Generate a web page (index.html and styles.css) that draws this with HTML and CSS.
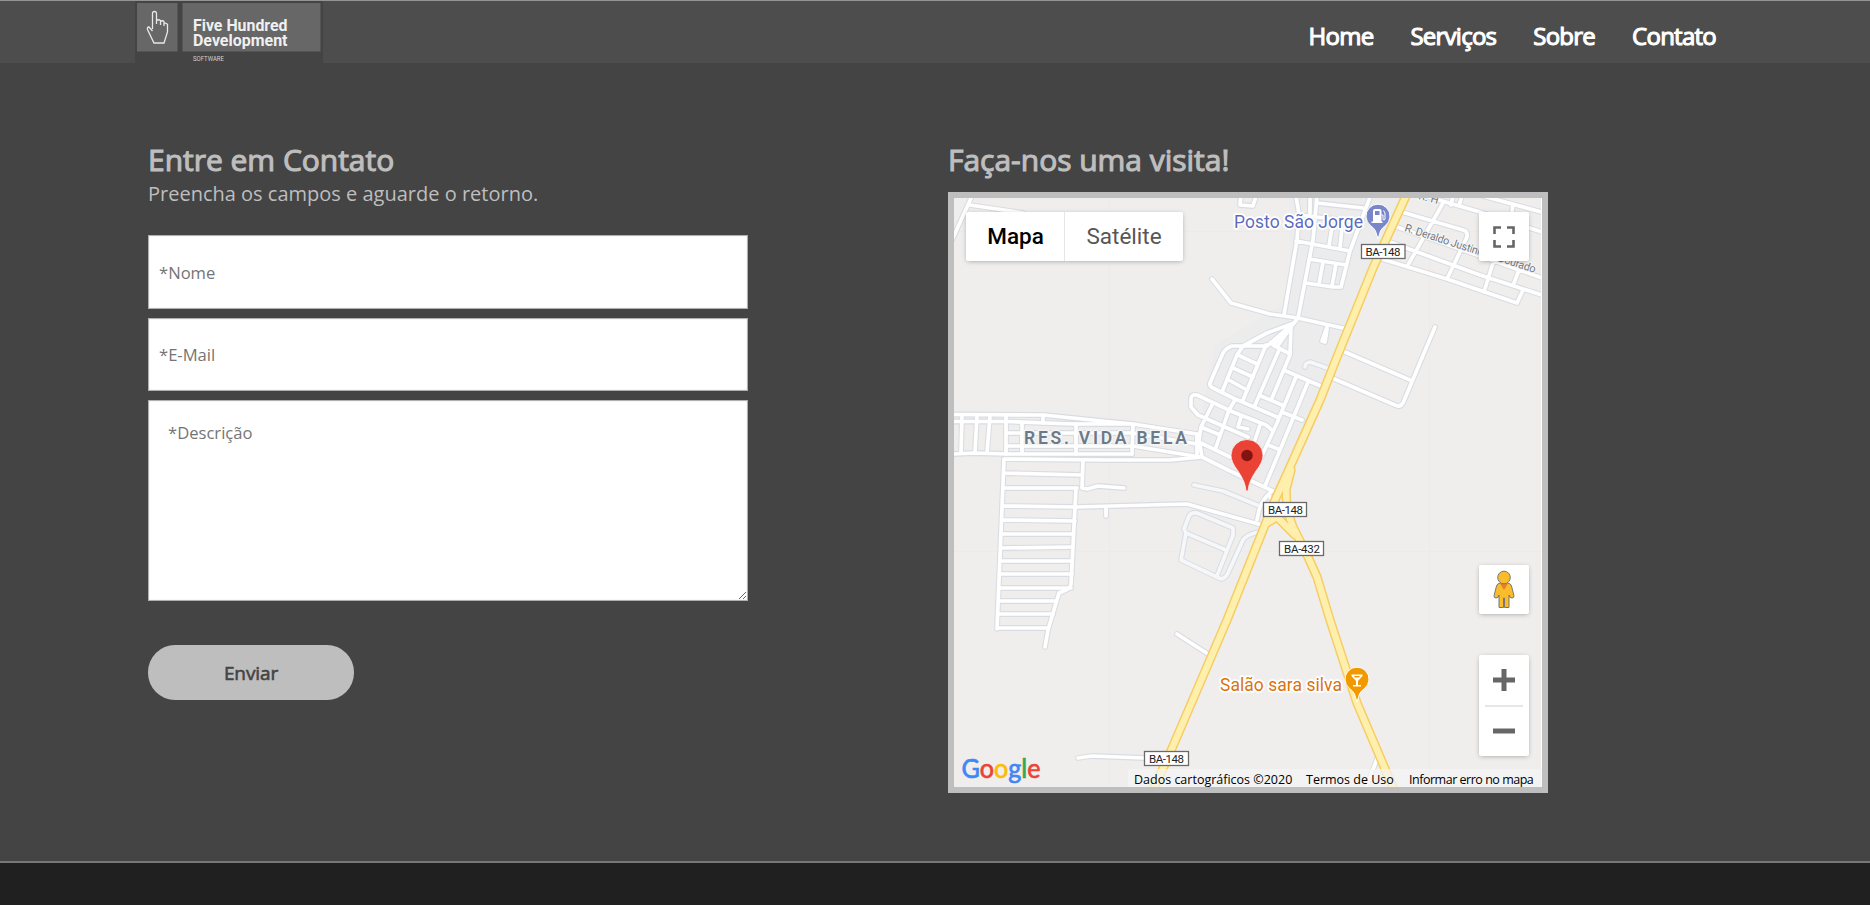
FILE: index.html
```html
<!DOCTYPE html>
<html lang="pt-BR">
<head>
<meta charset="utf-8">
<title>Five Hundred Development</title>
<link rel="stylesheet" href="styles.css">
</head>
<body>
<header class="topbar">
  <a class="logo" href="#">
    <svg width="188" height="62" viewBox="135 1 188 62">
      <rect class="logo-bg" x="135" y="1" width="188" height="62"/>
      <rect class="logo-box" x="137" y="3" width="40.500" height="48.500"/>
      <rect class="logo-box" x="182.500" y="3" width="138" height="48.500"/>
      <path class="logo-hand" d="M152.500 29V13.500q0-2 2-2t2 2V24v-3.500q2-1.500 4 0V25v-3.500q2-1.500 3.500 0V26v-2.500q2-1 3.500 1V32l-3.500 11h-10l-6.500-13.500q-.5-2.500 1.500-2.500l3.500 4"/>
      <text class="logo-name" x="193" y="30.500" textLength="94.500" lengthAdjust="spacingAndGlyphs">Five Hundred</text>
      <text class="logo-name" x="193" y="46" textLength="94.500" lengthAdjust="spacingAndGlyphs">Development</text>
      <text class="logo-sub" x="193" y="60.500" textLength="31" lengthAdjust="spacingAndGlyphs">SOFTWARE</text>
    </svg>
  </a>
  <nav class="menu">
    <a href="#">Home</a><a href="#">Serviços</a><a href="#">Sobre</a><a href="#">Contato</a>
  </nav>
</header>
<main class="contact">
  <section class="form-side">
    <h2 class="title">Entre em Contato</h2>
    <p class="lead">Preencha os campos e aguarde o retorno.</p>
    <form class="form">
      <input class="field" type="text" placeholder="*Nome">
      <input class="field email" type="text" placeholder="*E-Mail">
      <textarea class="field area" placeholder="*Descrição"></textarea>
      <button class="send" type="button">Enviar</button>
    </form>
  </section>
  <section class="map-side">
    <h2 class="title">Faça-nos uma visita!</h2>
    <div class="map">
      <svg class="map-canvas" viewBox="954 198 588 589">
        <defs>
          <g id="streets">
            <path d="M972 196L952 240M970 205L1023 213"/>
            <path d="M954 414.500L1043 415 1063 417 1107 421.500 1133 424 1197 434M954 421.500H1007L1073 424H1133M1007 433H1133L1197 444M1007 446H1133M1133 446L1200 457M954 454L973 453 1007 454H1132"/>
            <path d="M962 416L961 453M977 416L975 452M990 416L987 453M1006 416V454M1022 424V453M1043 415V423M1076 424V454M1133 424L1132 454M1197 434V454"/>
            <path d="M1004 459L1107 460H1170L1202 457M1004 459L997 629M1004 473L1082 475M1004 488H1077M1003 506L1076 507M1002 520L1075 521M1001 534H1073M1001 548L1073 547M1000 561H1072M999 574H1072M999 588H1071M998 601H1056M998 614H1053M997 628H1048"/>
            <path d="M1083 460L1082 488 1087 489 1098 486 1124 488M1076 488L1075 507 1071 584Q1070 589 1066 590L1059 593 1048 630 1045 647M1076 507L1187 504 1262 525M1106 507V516"/>
            <path d="M1177 634L1208 654M1078 758L1092 756 1145 758M1377 759L1370 777 1365 790"/>
            <path d="M1202 457L1230 471 1275 492M1270 493Q1262 500 1259 510L1257 520M1269 495Q1272 502 1276 500"/>
            <path d="M1212 279L1231 303 1270 314 1298 318 1347 329M1296 196L1299 214 1297 240 1284 315M1317 196L1313 240 1298 318M1310 196V213M1317 203L1363 208M1299 215L1360 222M1296 241L1350 251M1370 197L1350 251 1341 287H1333L1306 283M1309 259L1346 265M1323 262L1319 284M1336 264L1332 286M1332 227L1329 246M1342 228L1340 247"/>
            <path d="M1241 196L1240 205 1253 206 1256 196M1327 327L1322 341 1325 342 1327 329"/>
            <path d="M1298 318L1294 323 1267 333 1243 346 1237 355 1222 392M1294 323L1267 346 1232 346Q1226 348 1223 353L1210 383Q1209 386 1213 388L1233 398 1277 417M1294 323L1291 327 1290 355 1272 398M1294 323L1273 345 1290 354M1291 327L1277 347M1266 345L1243 400M1279 350L1255 405"/>
            <path d="M1238 355L1257 364M1233 368L1253 377M1227 379L1247 390M1286 371L1323 387M1296 377L1277 423 1260 460M1308 382L1280 450 1265 486M1261 396L1282 405M1282 412L1302 420M1268 445L1278 449"/>
            <path d="M1233 412L1197 395Q1191 394 1191 399V407L1198 415 1225 427 1248 437M1233 412L1266 425 1272 430M1212 405L1201 427 1199 440 1202 457M1235 400L1229 410 1215 450M1201 427L1220 435M1201 443L1230 457M1241 417L1238 427 1248 429M1260 425L1255 440"/>
            <path d="M1345 352L1410 380M1332 378L1395 405Q1400 408 1403 403L1435 327"/>
            <path d="M1402 212L1463 230Q1468 231 1467 237L1447 279M1397 227L1460 249 1545 279M1390 242L1480 275 1545 296M1382 259L1447 279 1517 303 1523 290M1443 203L1408 265M1425 196L1480 212 1542 232M1483 196L1545 213M1453 196L1451 205M1462 196L1459 206M1513 205L1511 218M1500 240L1484 292M1519 270L1514 283"/>
          </g>
          <g id="lanes">
            <path d="M1194 485L1223 491 1257 505M1197 513L1233 528V535L1217 576M1197 513Q1191 512 1189 516L1184 529 1186 533 1181 560 1221 579Q1226 578 1228 573L1243 540Q1246 535 1258 532M1186 533L1226 550M1305 367Q1305 363 1310 362L1330 369"/>
          </g>
          <g id="highway">
            <path d="M1406 196L1373 268 1337 357 1320 400 1290 467 1275 500 1265 525 1227 620 1170 753 1153 790"/>
            <path d="M1291 470L1286 490 1287 510 1293 527 1308 557 1317 577 1330 620 1357 703 1380 757 1394 790M1267 523L1277 517 1295 535"/>
          </g>
        </defs>
        <rect class="land" x="954" y="198" width="588" height="589"/>
        <path class="town" d="M1290 198H1408L1352 330 1283 480 1200 480V420L1215 345 1290 300Z"/>
        <path class="tile" d="M1109.500 198V787M1429.500 198V787M954 231.500H1542M954 551.500H1542"/>
        <use href="#streets" class="edge"/><use href="#lanes" class="edge"/>
        <use href="#lanes" class="lane"/><use href="#streets" class="road"/>
        <use href="#highway" class="hw-edge"/><use href="#highway" class="hw"/>
        <path class="frame" d="M1541.500 198V787"/>

        <g class="street-name">
          <text transform="translate(1404 231) rotate(17.800)" textLength="137">R. Deraldo Justiniano Dourado</text>
          <text transform="translate(1418 199) rotate(14)">R. H</text>
        </g>
        <text class="area-name" x="1024" y="443.500" textLength="163">RES. VIDA BELA</text>
        <text class="poi fuel" x="1234" y="228" textLength="129">Posto São Jorge</text>
        <text class="poi bar" x="1220" y="691" textLength="122">Salão sara silva</text>

        <g class="shield">
          <rect x="1361.500" y="244.500" width="43.500" height="14"/><text x="1365.500" y="255.500" textLength="35">BA-148</text>
          <rect x="1263.500" y="502.500" width="43" height="14"/><text x="1268" y="513.500" textLength="35">BA-148</text>
          <rect x="1279.500" y="541.500" width="44" height="14"/><text x="1284" y="552.500" textLength="36">BA-432</text>
          <rect x="1144.500" y="751.500" width="44" height="14"/><text x="1149" y="762.500" textLength="35">BA-148</text>
        </g>

        <path class="pin fuel-pin" d="M1378 239L1375.500 231Q1374 228 1370.500 225.500A12 12 0 1 1 1385.500 225.500Q1382 228 1380.500 231Z"/>
        <path class="glyph" d="M1373 221.500V211q0-2 2-2h4.500q2 0 2 2v10.500h1v1.500h-11v-1.500ZM1375 211v4h4.500v-4Z" fill-rule="evenodd"/>
        <path class="hose" d="M1381.500 215h1.500v4.500q1.500 1.500 2-.5v-6l-1.500-2.500"/>
        <path class="pin bar-pin" d="M1357 702L1354.500 694Q1353 691 1349.500 688.500A12 12 0 1 1 1364.500 688.500Q1361 691 1359.500 694Z"/>
        <path class="glyph" d="M1351.500 674.500h11v1.500l-4.500 5v4h3v1.500h-8v-1.500h3v-4l-4.500-5ZM1354 676l1 1.500h4l1-1.500Z" fill-rule="evenodd"/>

        <path class="marker" d="M1246 491Q1245.500 482 1238 471 1231 462 1231 455.500A16 16 0 0 1 1263 455.500Q1263 462 1256 471 1248.500 482 1248 491Z"/>
        <circle class="marker-dot" cx="1247" cy="455.500" r="5.800"/>

        <text class="google" x="961.500" y="777.500" textLength="79" lengthAdjust="spacingAndGlyphs"><tspan class="g-blue">G</tspan><tspan class="g-red">o</tspan><tspan class="g-yellow">o</tspan><tspan class="g-blue">g</tspan><tspan class="g-green">l</tspan><tspan class="g-red">e</tspan></text>
      </svg>
      <div class="ctl map-type"><button class="on">Mapa</button><button>Satélite</button></div>
      <button class="ctl full">
        <svg width="22" height="22" viewBox="0 0 22 22"><path d="M1.500 8V1.500H8M14 1.500h6.500V8M20.500 14v6.500H14M8 20.500H1.500V14"/></svg>
      </button>
      <button class="ctl pegman">
        <svg width="22" height="39" viewBox="0 0 22 39">
          <path class="peg" d="M7.500 13Q4 13.500 3.500 16L1 26q0 2 2 2 2.500 0 3-3v12.500h4.500V28h1v9.500H16V25q.5 3 3 3 2 0 2-2l-2.500-10q-.5-2.500-4-3Z"/>
          <path class="peg-shade" d="M7 13.500h8L11 20Z"/>
          <circle class="peg" cx="11" cy="7.500" r="6.300"/>
        </svg>
      </button>
      <div class="ctl zoom">
        <button><svg width="22" height="22" viewBox="0 0 22 22"><path d="M11 0V22M0 11H22"/></svg></button>
        <i class="rule"></i>
        <button><svg width="22" height="22" viewBox="0 0 22 22"><path d="M0 11H22"/></svg></button>
      </div>
      <div class="credits"><span class="c1">Dados cartográficos ©2020</span><span class="c2">Termos de Uso</span><span class="c3">Informar erro no mapa</span></div>
    </div>
  </section>
</main>
<footer class="foot"></footer>
</body>
</html>
```

FILE: styles.css
```css
* { box-sizing: border-box; }
body {
  margin: 0;
  height: 905px;
  display: flex;
  flex-direction: column;
  overflow: hidden;
  background: #444;
  color: #bebebe;
  font-family: "Open Sans", "Noto Sans", sans-serif;
}
button { border: 0; padding: 0; background: none; font: inherit; }

.topbar {
  display: flex;
  justify-content: space-between;
  height: 63px;
  padding: 0 154px 0 135px;
  border-top: 1px solid #929595;
  background: #4d4d4d;
}
.logo svg { display: block; }
.logo-bg { fill: #444; }
.logo-box { fill: #676767; }
.logo-hand { fill: none; stroke: #e8e8e8; stroke-width: 1.3; }
.logo-name { fill: #f0f0f0; font: bold 16.500px Roboto, sans-serif; }
.logo-sub { fill: #d0d0d0; font: 7.200px Roboto, sans-serif; }
.menu { display: flex; gap: 37px; padding-top: 18px; }
.menu a {
  color: #fff;
  font-size: 24px;
  line-height: 34px;
  letter-spacing: -.75px;
  text-decoration: none;
  -webkit-text-stroke: 1.1px #fff;
}

.contact { display: flex; gap: 200px; flex: 1; padding: 76px 148px 0; }
.form-side, .map-side { width: 600px; }
.title {
  margin: 0;
  font-size: 30px;
  font-weight: 400;
  line-height: 41px;
  letter-spacing: -.02px;
  -webkit-text-stroke: 1.1px #bebebe;
}
.lead { margin: 0; font-size: 20px; line-height: 27px; }
.form { display: flex; flex-direction: column; align-items: flex-start; padding-top: 28px; }
.field {
  width: 600px;
  height: 74px;
  margin: 0 0 9px;
  padding: 0 10px;
  border: 1px solid #b0b0b0;
  border-radius: 0;
  background: #fff;
  font: 16.600px "Open Sans", sans-serif;
  outline: 0;
  box-shadow: inset 0 0 1px #aaa;
}
.email { height: 73px; }
.field::placeholder { color: #757575; opacity: 1; }
.area { height: 201px; margin-bottom: 44px; padding: 20px 19px; resize: both; }
.send {
  width: 206px;
  height: 55px;
  border-radius: 27px;
  background: #bebebe;
  color: #444;
  font-size: 19px;
  letter-spacing: -.1px;
  -webkit-text-stroke: .6px #444;
}

.map {
  position: relative;
  width: 600px;
  height: 601px;
  margin-top: 12px;
  border: 6px solid #bebebe;
  overflow: hidden;
}
.map-canvas { display: block; width: 588px; height: 589px; font-family: Roboto, sans-serif; }
.land { fill: #efeeed; }
.town { fill: #ececed; }
.tile { stroke: #ebebea; stroke-width: 1; }
.frame { stroke: #fff; }
.edge, .road, .lane, .hw, .hw-edge { fill: none; stroke-linecap: round; stroke-linejoin: round; }
.edge { stroke: #d9dce1; stroke-width: 5.800; }
.road { stroke: #fff; stroke-width: 3.700; }
.lane { stroke: #f6f7f9; stroke-width: 3.700; }
.hw-edge { stroke: #f5cd63; stroke-width: 9.400; }
.hw { stroke: #ffefad; stroke-width: 6.400; }
.street-name { fill: #73777b; font-size: 11px; stroke: #f6f6f6; stroke-width: 2px; paint-order: stroke; }
.area-name { fill: #6b7a8a; font-size: 17.500px; font-weight: 600; stroke: #f4f4f4; stroke-width: 3px; paint-order: stroke; }
.poi { font-size: 17.500px; stroke: #fff; stroke-width: 3.500px; stroke-linejoin: round; paint-order: stroke; }
.fuel { fill: #5c6bc0; }
.bar { fill: #d9730c; }
.shield rect { fill: #fff; stroke: #6a6a6a; stroke-width: 1.300; }
.shield text { fill: #222; font-size: 11.500px; }
.pin { stroke: #fff; stroke-width: 1; }
.fuel-pin { fill: #7986cb; }
.bar-pin { fill: #f29900; }
.glyph { fill: #fff; }
.hose { fill: none; stroke: #fff; stroke-width: 1; }
.marker { fill: #ea4335; stroke: #fff; stroke-width: .7; }
.marker-dot { fill: #811411; }
.google { font: 26.500px Lato, sans-serif; stroke-width: .7px; }
.g-blue { fill: #4285f4; stroke: #4285f4; }
.g-red { fill: #ea4335; stroke: #ea4335; }
.g-yellow { fill: #fbbc05; stroke: #fbbc05; }
.g-green { fill: #34a853; stroke: #34a853; }

.ctl {
  position: absolute;
  background: #fff;
  border-radius: 2px;
  box-shadow: 0 1px 5px -1px rgba(0, 0, 0, .35);
  display: flex;
  align-items: center;
  justify-content: center;
}
.map-type { left: 12px; top: 14px; width: 217px; height: 49px; font: 22.500px Roboto, sans-serif; }
.map-type button { width: 118px; height: 49px; padding-bottom: 2px; color: #565656; }
.map-type .on { width: 99px; padding-left: 1px; color: #000; font-weight: 500; border-right: 1px solid #e6e6e6; }
.full, .pegman { right: 13px; width: 50px; height: 49px; }
.full { top: 14px; }
.full path { fill: none; stroke: #666; stroke-width: 2.600; }
.pegman { top: 367px; }
.peg { fill: #fbbc2b; stroke: #777; stroke-width: 1; }
.peg-shade { fill: #e57f26; }
.zoom { right: 13px; top: 457px; width: 50px; height: 101px; flex-direction: column; }
.zoom button { width: 50px; height: 50px; display: flex; align-items: center; justify-content: center; }
.zoom path { stroke: #666; stroke-width: 5; }
.rule { width: 38px; height: 2px; background: #e6e6e6; }
.credits {
  position: absolute;
  right: 0;
  bottom: 0;
  display: flex;
  width: 414px;
  height: 18px;
  padding-left: 6px;
  background: rgba(245, 245, 245, .7);
  color: #000;
  font-size: 12.500px;
  line-height: 21px;
  white-space: nowrap;
}
.c1 { width: 172px; }
.c2 { width: 103px; }
.c3 { letter-spacing: -.48px; }

.foot { height: 44px; border-top: 2px solid #777; background: #202020; }
```
